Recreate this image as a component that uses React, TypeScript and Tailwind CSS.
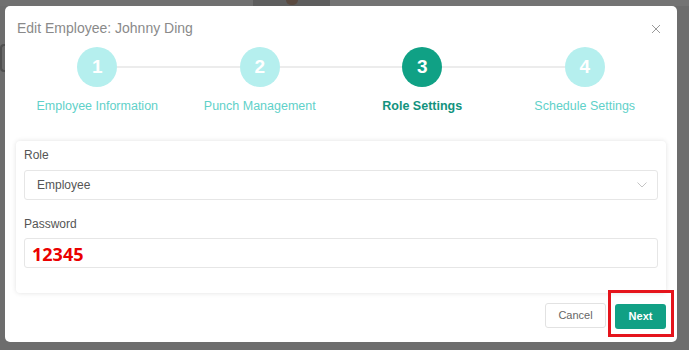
import React from "react";

const steps = [
  { n: "1", label: "Employee Information", state: "done" },
  { n: "2", label: "Punch Management", state: "done" },
  { n: "3", label: "Role Settings", state: "active" },
  { n: "4", label: "Schedule Settings", state: "todo" },
];

export default function App() {
  return (
    <div
      className="relative w-[689px] h-[350px] overflow-hidden bg-[#6d6d6d]"
      style={{ fontFamily: '"Liberation Sans", Arial, sans-serif' }}
    >
      {/* dimmed page behind */}
      <div className="absolute left-0 top-0 w-[689px] h-[6px] flex">
        <div className="w-[253px] h-full bg-[#707070]" />
        <div className="w-[77px] h-full bg-[#5e5e5e] flex justify-center">
          <div className="w-[12px] h-[5px] bg-[#5a4a40] rounded-b-full" />
        </div>
        <div className="flex-1 h-full bg-[#747474]" />
      </div>
      <div className="absolute left-0 top-[44px] w-[5px] h-[28px] rounded-l-[4px] border-2 border-r-0 border-[#505050] bg-[#6a6a6a]" />

      <div className="absolute left-[5px] top-[6px] w-[672px] h-[336px] bg-white rounded-[5px] flex flex-col px-[11px]">
        {/* header */}
        <div className="flex items-center justify-between pt-[12px] h-[32px]">
          <div className="text-[14px] leading-[20px] text-[#8a8a8a] pl-[1px]">
            Edit Employee: Johnny Ding
          </div>
          <svg width="10" height="10" viewBox="0 0 10 10" className="mr-[5px] mt-[2px]">
            <path d="M1 1 L9 9 M9 1 L1 9" stroke="#9a9a9a" strokeWidth="1" />
          </svg>
        </div>

        {/* steps */}
        <div className="grid grid-cols-4 mt-[9px]">
          {steps.map((s, i) => (
            <div key={s.n} className="flex flex-col items-center">
              <div className="flex items-center w-full">
                <div className={`flex-1 h-[2px] ${i === 0 ? "" : "bg-[#ececec]"}`} />
                <div
                  className={`w-[40px] h-[40px] rounded-full flex items-center justify-center text-white font-bold text-[19px] ${
                    s.state === "active" ? "bg-[#10a185]" : "bg-[#b5efee]"
                  }`}
                >
                  {s.n}
                </div>
                <div className={`flex-1 h-[2px] ${i === 3 ? "" : "bg-[#ececec]"}`} />
              </div>
              <div
                className={`mt-[11px] text-[12.5px] leading-[16px] ${
                  s.state === "active" ? "text-[#12937e] font-bold" : "text-[#5fd1c9]"
                }`}
              >
                {s.label}
              </div>
            </div>
          ))}
        </div>

        {/* card */}
        <div className="mt-[27px] rounded-[4px] bg-white shadow-[0_0_5px_rgba(0,0,0,0.12)] px-[8px] pt-[6px] pb-[25px]">
          <div className="text-[12px] leading-[16px] text-[#555]">Role</div>
          <div className="mt-[7px] h-[30px] border border-[#e6e6e6] rounded-[3px] flex items-center justify-between pl-[12px] pr-[10px]">
            <span className="text-[12px] text-[#555]">Employee</span>
            <svg width="10" height="6" viewBox="0 0 10 6">
              <path d="M0.5 0.5 L5 5 L9.5 0.5" fill="none" stroke="#c4c4c4" strokeWidth="1" />
            </svg>
          </div>
          <div className="mt-[16px] text-[12px] leading-[16px] text-[#555]">Password</div>
          <div className="mt-[6px] h-[30px] border border-[#e6e6e6] rounded-[3px] flex items-center pl-[7px]">
            <span
              className="text-[18px] font-bold text-[#ea0000] leading-none mt-[2px]"
              style={{ fontFamily: '"Open Sans", sans-serif' }}
            >
              12345
            </span>
          </div>
        </div>

        {/* footer */}
        <div className="flex justify-end gap-[9px] mt-[10px]">
          <button className="w-[61px] h-[25px] border border-[#e2e2e2] rounded-[3px] text-[11px] text-[#666] bg-white">
            Cancel
          </button>
          <div className="relative">
            <button className="w-[51px] h-[25px] rounded-[3px] text-[11px] font-bold text-white bg-[#11a085]">
              Next
            </button>
            <div className="absolute -left-[7px] -top-[13px] -right-[8px] -bottom-[8px] border-[3px] border-[#e5141c] pointer-events-none" />
          </div>
        </div>
      </div>
    </div>
  );
}
